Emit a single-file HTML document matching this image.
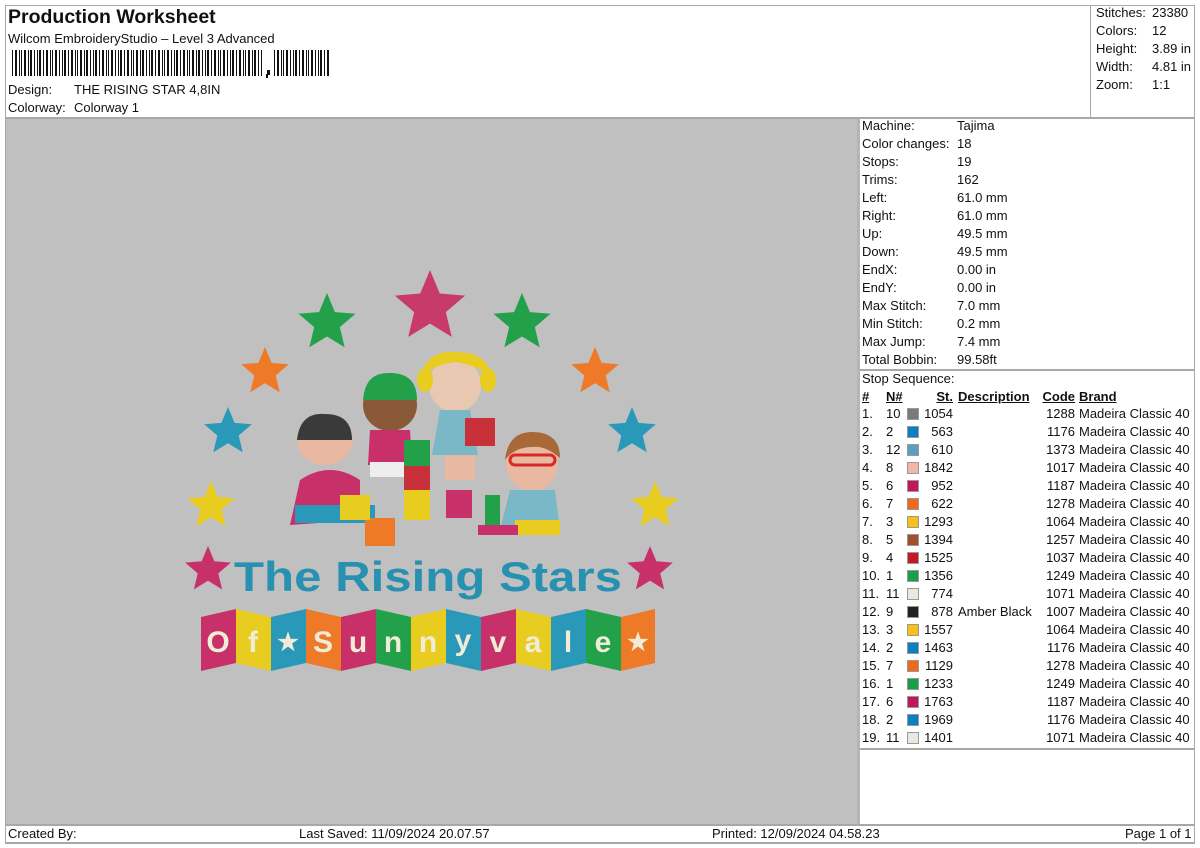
<!DOCTYPE html>
<html><head><meta charset="utf-8"><style>
*{margin:0;padding:0;box-sizing:border-box}
body{width:1200px;height:848px;background:#fff;font-family:"Liberation Sans",Arial,sans-serif;font-size:13px;color:#111;position:relative;overflow:hidden}
.a{position:absolute;white-space:nowrap;line-height:18px}
.ln{position:absolute;background:#a8a8a8}
.sw{position:absolute;width:12px;height:12px;border:1px solid #999}
.r{text-align:right}
u{text-decoration:underline}
</style></head><body>
<div class="ln" style="left:5px;top:5px;width:1190px;height:1px"></div>
<div class="ln" style="left:5px;top:5px;width:1px;height:838px"></div>
<div class="ln" style="left:1194px;top:5px;width:1px;height:838px"></div>
<div class="ln" style="left:5px;top:842px;width:1190px;height:2px"></div>
<div class="ln" style="left:5px;top:117px;width:1190px;height:2px"></div>
<div class="ln" style="left:1090px;top:5px;width:1px;height:113px"></div>
<div class="ln" style="left:5px;top:824px;width:1190px;height:2px"></div>
<div class="a" style="left:8px;top:6px;font-size:19.5px;font-weight:bold;line-height:22px">Production Worksheet</div>
<div class="a" style="left:8px;top:30px">Wilcom EmbroideryStudio – Level 3 Advanced</div>
<svg style="position:absolute;left:12px;top:50px" width="320" height="28">
<g fill="#111">
<rect x="0" y="0" width="1" height="26"/><rect x="3" y="0" width="2" height="26"/><rect x="7" y="0" width="1" height="26"/><rect x="9" y="0" width="1" height="26"/><rect x="12" y="0" width="2" height="26"/><rect x="16" y="0" width="1" height="26"/><rect x="18" y="0" width="2" height="26"/><rect x="22" y="0" width="1" height="26"/><rect x="25" y="0" width="1" height="26"/><rect x="27" y="0" width="2" height="26"/><rect x="31" y="0" width="1" height="26"/><rect x="34" y="0" width="2" height="26"/><rect x="38" y="0" width="1" height="26"/><rect x="40" y="0" width="1" height="26"/><rect x="43" y="0" width="2" height="26"/><rect x="47" y="0" width="1" height="26"/><rect x="50" y="0" width="1" height="26"/><rect x="52" y="0" width="2" height="26"/><rect x="56" y="0" width="1" height="26"/><rect x="59" y="0" width="2" height="26"/><rect x="63" y="0" width="1" height="26"/><rect x="65" y="0" width="1" height="26"/><rect x="68" y="0" width="2" height="26"/><rect x="72" y="0" width="1" height="26"/><rect x="74" y="0" width="2" height="26"/><rect x="78" y="0" width="1" height="26"/><rect x="81" y="0" width="1" height="26"/><rect x="83" y="0" width="2" height="26"/><rect x="87" y="0" width="1" height="26"/><rect x="90" y="0" width="2" height="26"/><rect x="94" y="0" width="1" height="26"/><rect x="96" y="0" width="1" height="26"/><rect x="99" y="0" width="2" height="26"/><rect x="103" y="0" width="1" height="26"/><rect x="106" y="0" width="1" height="26"/><rect x="108" y="0" width="2" height="26"/><rect x="112" y="0" width="1" height="26"/><rect x="115" y="0" width="2" height="26"/><rect x="119" y="0" width="1" height="26"/><rect x="121" y="0" width="1" height="26"/><rect x="124" y="0" width="2" height="26"/><rect x="128" y="0" width="1" height="26"/><rect x="130" y="0" width="2" height="26"/><rect x="134" y="0" width="1" height="26"/><rect x="137" y="0" width="1" height="26"/><rect x="139" y="0" width="2" height="26"/><rect x="143" y="0" width="1" height="26"/><rect x="146" y="0" width="2" height="26"/><rect x="150" y="0" width="1" height="26"/><rect x="152" y="0" width="1" height="26"/><rect x="155" y="0" width="2" height="26"/><rect x="159" y="0" width="1" height="26"/><rect x="162" y="0" width="1" height="26"/><rect x="164" y="0" width="2" height="26"/><rect x="168" y="0" width="1" height="26"/><rect x="171" y="0" width="2" height="26"/><rect x="175" y="0" width="1" height="26"/><rect x="177" y="0" width="1" height="26"/><rect x="180" y="0" width="2" height="26"/><rect x="184" y="0" width="1" height="26"/><rect x="186" y="0" width="2" height="26"/><rect x="190" y="0" width="1" height="26"/><rect x="193" y="0" width="1" height="26"/><rect x="195" y="0" width="2" height="26"/><rect x="199" y="0" width="1" height="26"/><rect x="202" y="0" width="2" height="26"/><rect x="206" y="0" width="1" height="26"/><rect x="208" y="0" width="1" height="26"/><rect x="211" y="0" width="2" height="26"/><rect x="215" y="0" width="1" height="26"/><rect x="218" y="0" width="1" height="26"/><rect x="220" y="0" width="2" height="26"/><rect x="224" y="0" width="1" height="26"/><rect x="227" y="0" width="2" height="26"/><rect x="231" y="0" width="1" height="26"/><rect x="233" y="0" width="1" height="26"/><rect x="236" y="0" width="2" height="26"/><rect x="240" y="0" width="1" height="26"/><rect x="242" y="0" width="2" height="26"/><rect x="246" y="0" width="1" height="26"/><rect x="249" y="0" width="1" height="26"/>
<rect x="255" y="20" width="3" height="5"/><rect x="254" y="24" width="2" height="4"/>
<rect x="262" y="0" width="1" height="26"/><rect x="265" y="0" width="2" height="26"/><rect x="269" y="0" width="1" height="26"/><rect x="271" y="0" width="1" height="26"/><rect x="274" y="0" width="2" height="26"/><rect x="278" y="0" width="1" height="26"/><rect x="281" y="0" width="1" height="26"/><rect x="283" y="0" width="2" height="26"/><rect x="287" y="0" width="1" height="26"/><rect x="290" y="0" width="2" height="26"/><rect x="294" y="0" width="1" height="26"/><rect x="296" y="0" width="1" height="26"/><rect x="299" y="0" width="2" height="26"/><rect x="303" y="0" width="1" height="26"/><rect x="306" y="0" width="1" height="26"/><rect x="308" y="0" width="2" height="26"/><rect x="312" y="0" width="1" height="26"/><rect x="315" y="0" width="2" height="26"/>
</g></svg>
<div class="a" style="left:8px;top:81px">Design:</div><div class="a" style="left:74px;top:81px">THE RISING STAR 4,8IN</div>
<div class="a" style="left:8px;top:99px">Colorway:</div><div class="a" style="left:74px;top:99px">Colorway 1</div>
<div class="a" style="left:1096px;top:4px">Stitches:</div><div class="a" style="left:1152px;top:4px">23380</div>
<div class="a" style="left:1096px;top:22px">Colors:</div><div class="a" style="left:1152px;top:22px">12</div>
<div class="a" style="left:1096px;top:40px">Height:</div><div class="a" style="left:1152px;top:40px">3.89 in</div>
<div class="a" style="left:1096px;top:58px">Width:</div><div class="a" style="left:1152px;top:58px">4.81 in</div>
<div class="a" style="left:1096px;top:76px">Zoom:</div><div class="a" style="left:1152px;top:76px">1:1</div>

<div style="position:absolute;left:6px;top:119px;width:851px;height:705px;background:#c0c0c0"></div>
<div class="ln" style="left:857px;top:119px;width:3px;height:705px;background:#b5b5b5"></div>
<div class="ln" style="left:860px;top:369px;width:335px;height:2px"></div>
<div class="ln" style="left:860px;top:748px;width:335px;height:2px"></div>

<svg style="position:absolute;left:0;top:0" width="860" height="824">
<defs><polygon id="st" points="0,-1 .264,-.364 .951,-.309 .428,.139 .588,.809 0,.45 -.588,.809 -.428,.139 -.951,-.309 -.264,-.364"/></defs>
<use href="#st" fill="#c83a6a" transform="translate(430,307) scale(37)"/>
<use href="#st" fill="#22a04a" transform="translate(327,323) scale(30)"/>
<use href="#st" fill="#22a04a" transform="translate(522,323) scale(30)"/>
<use href="#st" fill="#ee7a28" transform="translate(265,372) scale(25)"/>
<use href="#st" fill="#ee7a28" transform="translate(595,372) scale(25)"/>
<use href="#st" fill="#2a98b8" transform="translate(228,432) scale(25)"/>
<use href="#st" fill="#2a98b8" transform="translate(632,432) scale(25)"/>
<use href="#st" fill="#e8cc20" transform="translate(211,506) scale(25)"/>
<use href="#st" fill="#e8cc20" transform="translate(655,506) scale(25)"/>
<use href="#st" fill="#c8306a" transform="translate(208,570) scale(24)"/>
<use href="#st" fill="#c8306a" transform="translate(650,570) scale(24)"/>
<ellipse cx="325" cy="440" rx="28" ry="25" fill="#e8b8a0"/><path d="M297 440 Q300 412 325 414 Q352 414 352 440 Z" fill="#3a3a3a"/>
<path d="M300 480 Q330 460 360 480 L360 520 L290 525 Z" fill="#c8306a"/><rect x="295" y="505" width="80" height="18" fill="#2a98b8"/>
<ellipse cx="390" cy="405" rx="27" ry="26" fill="#8a5a38"/><path d="M363 400 Q365 372 390 373 Q417 373 417 400 Z" fill="#22a04a"/>
<path d="M370 430 L410 430 L412 465 L368 465 Z" fill="#c8306a"/><rect x="370" y="462" width="40" height="15" fill="#eee"/>
<ellipse cx="455" cy="385" rx="26" ry="27" fill="#e8c8b0"/><path d="M420 380 Q425 350 455 352 Q490 352 492 380 Q480 365 455 362 Q430 365 420 380Z" fill="#e8cc20"/>
<ellipse cx="425" cy="380" rx="8" ry="12" fill="#e8cc20"/><ellipse cx="488" cy="380" rx="8" ry="12" fill="#e8cc20"/>
<path d="M440 410 L470 410 L478 455 L432 455 Z" fill="#7ab8c8"/><rect x="465" y="418" width="30" height="28" fill="#c8303a"/>
<rect x="445" y="455" width="30" height="25" fill="#e8b8a0"/>
<ellipse cx="532" cy="463" rx="26" ry="28" fill="#e8b8a0"/><path d="M505 460 Q508 432 532 432 Q560 432 560 458 Q545 445 532 447 Q515 447 505 460Z" fill="#a86838"/>
<rect x="510" y="455" width="45" height="10" rx="5" fill="none" stroke="#d82828" stroke-width="3"/>
<path d="M510 490 L555 490 L560 530 L500 530 Z" fill="#7ab8c8"/><rect x="515" y="520" width="45" height="15" fill="#e8cc20"/>
<rect x="485" y="495" width="15" height="30" fill="#22a04a"/><rect x="478" y="525" width="40" height="10" fill="#c8306a"/>
<rect x="404" y="440" width="26" height="26" fill="#22a04a"/><rect x="404" y="466" width="26" height="24" fill="#c8303a"/><rect x="404" y="490" width="26" height="30" fill="#e8cc20"/>
<rect x="446" y="490" width="26" height="28" fill="#c8306a"/><rect x="365" y="518" width="30" height="28" fill="#ee7a28"/>
<rect x="340" y="495" width="30" height="25" fill="#e8cc20"/>
<text x="428" y="591" text-anchor="middle" font-family="Liberation Sans,sans-serif" font-weight="bold" font-size="42" fill="#2890b0" textLength="388" lengthAdjust="spacingAndGlyphs">The Rising Stars</text>
<g font-family="Liberation Sans,sans-serif" font-weight="bold" font-size="30" fill="#f0ecd8" text-anchor="middle">
<polygon points="201,617 236,609 236,663 201,671" fill="#c8306a"/><text x="218" y="652">O</text>
<polygon points="236,609 271,617 271,671 236,663" fill="#e8cc20"/><text x="253" y="652">f</text>
<polygon points="271,617 306,609 306,663 271,671" fill="#2a98b8"/><text x="288" y="650" font-size="24">★</text>
<polygon points="306,609 341,617 341,671 306,663" fill="#ee7a28"/><text x="323" y="652">S</text>
<polygon points="341,617 376,609 376,663 341,671" fill="#c8306a"/><text x="358" y="652">u</text>
<polygon points="376,609 411,617 411,671 376,663" fill="#22a04a"/><text x="393" y="652">n</text>
<polygon points="411,617 446,609 446,663 411,671" fill="#e8cc20"/><text x="428" y="652">n</text>
<polygon points="446,609 481,617 481,671 446,663" fill="#2a98b8"/><text x="463" y="650">y</text>
<polygon points="481,617 516,609 516,663 481,671" fill="#c8306a"/><text x="498" y="652">v</text>
<polygon points="516,609 551,617 551,671 516,663" fill="#e8cc20"/><text x="533" y="652">a</text>
<polygon points="551,617 586,609 586,663 551,671" fill="#2a98b8"/><text x="568" y="652">l</text>
<polygon points="586,609 621,617 621,671 586,663" fill="#22a04a"/><text x="603" y="652">e</text>
<polygon points="621,617 655,609 655,663 621,671" fill="#ee7a28"/><text x="638" y="650" font-size="24">★</text>
</g>
</svg>

<div style="position:absolute;left:862px;top:117px">
<div class="a" style="top:0">Machine:</div><div class="a" style="left:95px;top:0">Tajima</div>
<div class="a" style="top:18px">Color changes:</div><div class="a" style="left:95px;top:18px">18</div>
<div class="a" style="top:36px">Stops:</div><div class="a" style="left:95px;top:36px">19</div>
<div class="a" style="top:54px">Trims:</div><div class="a" style="left:95px;top:54px">162</div>
<div class="a" style="top:72px">Left:</div><div class="a" style="left:95px;top:72px">61.0 mm</div>
<div class="a" style="top:90px">Right:</div><div class="a" style="left:95px;top:90px">61.0 mm</div>
<div class="a" style="top:108px">Up:</div><div class="a" style="left:95px;top:108px">49.5 mm</div>
<div class="a" style="top:126px">Down:</div><div class="a" style="left:95px;top:126px">49.5 mm</div>
<div class="a" style="top:144px">EndX:</div><div class="a" style="left:95px;top:144px">0.00 in</div>
<div class="a" style="top:162px">EndY:</div><div class="a" style="left:95px;top:162px">0.00 in</div>
<div class="a" style="top:180px">Max Stitch:</div><div class="a" style="left:95px;top:180px">7.0 mm</div>
<div class="a" style="top:198px">Min Stitch:</div><div class="a" style="left:95px;top:198px">0.2 mm</div>
<div class="a" style="top:216px">Max Jump:</div><div class="a" style="left:95px;top:216px">7.4 mm</div>
<div class="a" style="top:234px">Total Bobbin:</div><div class="a" style="left:95px;top:234px">99.58ft</div>
<div class="a" style="top:253px">Stop Sequence:</div>
<div class="a" style="top:271px;font-weight:bold"><u>#</u></div>
<div class="a" style="left:24px;top:271px;font-weight:bold"><u>N#</u></div>
<div class="a r" style="left:50px;width:41px;top:271px;font-weight:bold"><u>St.</u></div>
<div class="a" style="left:96px;top:271px;font-weight:bold"><u>Description</u></div>
<div class="a r" style="left:160px;width:53px;top:271px;font-weight:bold"><u>Code</u></div>
<div class="a" style="left:217px;top:271px;font-weight:bold"><u>Brand</u></div>
</div>
<div style="position:absolute;left:862px;top:405px">
<div style="position:absolute;top:0"><div class="a">1.</div><div class="a" style="left:24px">10</div><div class="sw" style="left:45px;top:3px;background:#7a7a7a"></div><div class="a r" style="left:50px;width:41px">1054</div><div class="a r" style="left:160px;width:53px">1288</div><div class="a" style="left:217px">Madeira Classic 40</div></div>
<div style="position:absolute;top:18px"><div class="a">2.</div><div class="a" style="left:24px">2</div><div class="sw" style="left:45px;top:3px;background:#0a80c0"></div><div class="a r" style="left:50px;width:41px">563</div><div class="a r" style="left:160px;width:53px">1176</div><div class="a" style="left:217px">Madeira Classic 40</div></div>
<div style="position:absolute;top:36px"><div class="a">3.</div><div class="a" style="left:24px">12</div><div class="sw" style="left:45px;top:3px;background:#5a9ec0"></div><div class="a r" style="left:50px;width:41px">610</div><div class="a r" style="left:160px;width:53px">1373</div><div class="a" style="left:217px">Madeira Classic 40</div></div>
<div style="position:absolute;top:54px"><div class="a">4.</div><div class="a" style="left:24px">8</div><div class="sw" style="left:45px;top:3px;background:#f0b8a8"></div><div class="a r" style="left:50px;width:41px">1842</div><div class="a r" style="left:160px;width:53px">1017</div><div class="a" style="left:217px">Madeira Classic 40</div></div>
<div style="position:absolute;top:72px"><div class="a">5.</div><div class="a" style="left:24px">6</div><div class="sw" style="left:45px;top:3px;background:#c0185a"></div><div class="a r" style="left:50px;width:41px">952</div><div class="a r" style="left:160px;width:53px">1187</div><div class="a" style="left:217px">Madeira Classic 40</div></div>
<div style="position:absolute;top:90px"><div class="a">6.</div><div class="a" style="left:24px">7</div><div class="sw" style="left:45px;top:3px;background:#f06820"></div><div class="a r" style="left:50px;width:41px">622</div><div class="a r" style="left:160px;width:53px">1278</div><div class="a" style="left:217px">Madeira Classic 40</div></div>
<div style="position:absolute;top:108px"><div class="a">7.</div><div class="a" style="left:24px">3</div><div class="sw" style="left:45px;top:3px;background:#f8c018"></div><div class="a r" style="left:50px;width:41px">1293</div><div class="a r" style="left:160px;width:53px">1064</div><div class="a" style="left:217px">Madeira Classic 40</div></div>
<div style="position:absolute;top:126px"><div class="a">8.</div><div class="a" style="left:24px">5</div><div class="sw" style="left:45px;top:3px;background:#a05030"></div><div class="a r" style="left:50px;width:41px">1394</div><div class="a r" style="left:160px;width:53px">1257</div><div class="a" style="left:217px">Madeira Classic 40</div></div>
<div style="position:absolute;top:144px"><div class="a">9.</div><div class="a" style="left:24px">4</div><div class="sw" style="left:45px;top:3px;background:#c81828"></div><div class="a r" style="left:50px;width:41px">1525</div><div class="a r" style="left:160px;width:53px">1037</div><div class="a" style="left:217px">Madeira Classic 40</div></div>
<div style="position:absolute;top:162px"><div class="a">10.</div><div class="a" style="left:24px">1</div><div class="sw" style="left:45px;top:3px;background:#18a048"></div><div class="a r" style="left:50px;width:41px">1356</div><div class="a r" style="left:160px;width:53px">1249</div><div class="a" style="left:217px">Madeira Classic 40</div></div>
<div style="position:absolute;top:180px"><div class="a">11.</div><div class="a" style="left:24px">11</div><div class="sw" style="left:45px;top:3px;background:#ebe8e0"></div><div class="a r" style="left:50px;width:41px">774</div><div class="a r" style="left:160px;width:53px">1071</div><div class="a" style="left:217px">Madeira Classic 40</div></div>
<div style="position:absolute;top:198px"><div class="a">12.</div><div class="a" style="left:24px">9</div><div class="sw" style="left:45px;top:3px;background:#222"></div><div class="a r" style="left:50px;width:41px">878</div><div class="a" style="left:96px">Amber Black</div><div class="a r" style="left:160px;width:53px">1007</div><div class="a" style="left:217px">Madeira Classic 40</div></div>
<div style="position:absolute;top:216px"><div class="a">13.</div><div class="a" style="left:24px">3</div><div class="sw" style="left:45px;top:3px;background:#f8c018"></div><div class="a r" style="left:50px;width:41px">1557</div><div class="a r" style="left:160px;width:53px">1064</div><div class="a" style="left:217px">Madeira Classic 40</div></div>
<div style="position:absolute;top:234px"><div class="a">14.</div><div class="a" style="left:24px">2</div><div class="sw" style="left:45px;top:3px;background:#0a80c0"></div><div class="a r" style="left:50px;width:41px">1463</div><div class="a r" style="left:160px;width:53px">1176</div><div class="a" style="left:217px">Madeira Classic 40</div></div>
<div style="position:absolute;top:252px"><div class="a">15.</div><div class="a" style="left:24px">7</div><div class="sw" style="left:45px;top:3px;background:#f06820"></div><div class="a r" style="left:50px;width:41px">1129</div><div class="a r" style="left:160px;width:53px">1278</div><div class="a" style="left:217px">Madeira Classic 40</div></div>
<div style="position:absolute;top:270px"><div class="a">16.</div><div class="a" style="left:24px">1</div><div class="sw" style="left:45px;top:3px;background:#18a048"></div><div class="a r" style="left:50px;width:41px">1233</div><div class="a r" style="left:160px;width:53px">1249</div><div class="a" style="left:217px">Madeira Classic 40</div></div>
<div style="position:absolute;top:288px"><div class="a">17.</div><div class="a" style="left:24px">6</div><div class="sw" style="left:45px;top:3px;background:#c0185a"></div><div class="a r" style="left:50px;width:41px">1763</div><div class="a r" style="left:160px;width:53px">1187</div><div class="a" style="left:217px">Madeira Classic 40</div></div>
<div style="position:absolute;top:306px"><div class="a">18.</div><div class="a" style="left:24px">2</div><div class="sw" style="left:45px;top:3px;background:#0a80c0"></div><div class="a r" style="left:50px;width:41px">1969</div><div class="a r" style="left:160px;width:53px">1176</div><div class="a" style="left:217px">Madeira Classic 40</div></div>
<div style="position:absolute;top:324px"><div class="a">19.</div><div class="a" style="left:24px">11</div><div class="sw" style="left:45px;top:3px;background:#ebe8e0"></div><div class="a r" style="left:50px;width:41px">1401</div><div class="a r" style="left:160px;width:53px">1071</div><div class="a" style="left:217px">Madeira Classic 40</div></div>
</div>

<div class="a" style="left:8px;top:825px">Created By:</div>
<div class="a" style="left:299px;top:825px">Last Saved: 11/09/2024 20.07.57</div>
<div class="a" style="left:712px;top:825px">Printed: 12/09/2024 04.58.23</div>
<div class="a" style="left:1125px;top:825px">Page 1 of 1</div>
</body></html>
